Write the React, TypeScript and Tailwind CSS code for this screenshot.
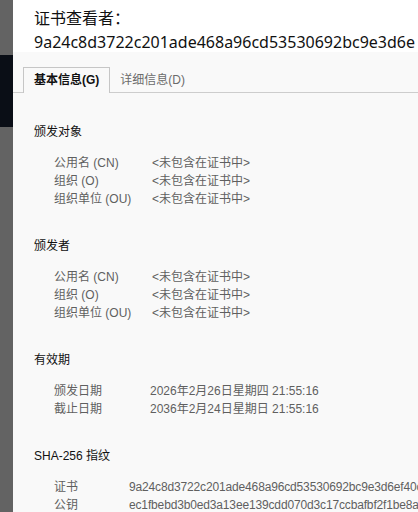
import React from 'react';

type Row = { label: string; value: string };
type Section = { title: string; labelWidth: string; rows: Row[] };

const NOT_INCLUDED = '<未包含在证书中>';

const sections: Section[] = [
  {
    title: '颁发对象',
    labelWidth: 'grid-cols-[98px_1fr]',
    rows: [
      { label: '公用名 (CN)', value: NOT_INCLUDED },
      { label: '组织 (O)', value: NOT_INCLUDED },
      { label: '组织单位 (OU)', value: NOT_INCLUDED },
    ],
  },
  {
    title: '颁发者',
    labelWidth: 'grid-cols-[98px_1fr]',
    rows: [
      { label: '公用名 (CN)', value: NOT_INCLUDED },
      { label: '组织 (O)', value: NOT_INCLUDED },
      { label: '组织单位 (OU)', value: NOT_INCLUDED },
    ],
  },
  {
    title: '有效期',
    labelWidth: 'grid-cols-[96px_1fr]',
    rows: [
      { label: '颁发日期', value: '2026年2月26日星期四 21:55:16' },
      { label: '截止日期', value: '2036年2月24日星期日 21:55:16' },
    ],
  },
  {
    title: 'SHA-256 指纹',
    labelWidth: 'grid-cols-[75px_1fr]',
    rows: [
      { label: '证书', value: '9a24c8d3722c201ade468a96cd53530692bc9e3d6ef40c' },
      { label: '公钥', value: 'ec1fbebd3b0ed3a13ee139cdd070d3c17ccbafbf2f1be8a' },
    ],
  },
];

const CertSection: React.FC<{ section: Section }> = ({ section }) => {
  return (
    <div className="mb-[29px]">
      <div className="text-[#111] mb-[13px]">{section.title}</div>
      <div className={`grid ${section.labelWidth} pl-[20px] text-[#5f5f5f]`}>
        {section.rows.map((r, i) => (
          <React.Fragment key={i}>
            <div>{r.label}</div>
            <div className={section.title.startsWith('SHA') ? 'tracking-[-0.15px]' : ''}>{r.value}</div>
          </React.Fragment>
        ))}
      </div>
    </div>
  );
};

const App: React.FC = () => {
  return (
    <div className="w-[418px] h-[512px] flex overflow-hidden whitespace-nowrap font-['Liberation_Sans','Noto_Sans_CJK_SC',sans-serif]">
      {/* background behind the dialog */}
      <div className="w-[13px] shrink-0 flex flex-col">
        <div className="h-[55px] bg-[#636363]"></div>
        <div className="h-[72px] bg-[#0a0e16]"></div>
        <div className="flex-1 bg-[#636363]"></div>
      </div>

      <div className="flex-1 min-w-0 flex flex-col bg-[#f9f9f9]">
        <div className="h-[52px] shrink-0 bg-white pl-[21px] pt-[6px] text-[16px] leading-[24px] text-[#111] font-['Noto_Sans','Noto_Sans_CJK_SC',sans-serif]">
          <div>证书查看者：</div>
          <div>9a24c8d3722c201ade468a96cd53530692bc9e3d6e</div>
        </div>

        <div className="h-[41px] shrink-0 flex items-start pt-[15px] pl-[10px] border-b border-[#cdcdcd] text-[12px]">
          <div className="relative h-[26px] px-[10px] leading-[24px] border border-b-0 border-[#c6c6c6] bg-[#f9f9f9] font-bold text-[#111]">
            基本信息(G)
          </div>
          <div className="h-[26px] px-[10px] pt-px leading-[24px] text-[#6b6b6b]">详细信息(D)</div>
        </div>

        <div className="flex-1 pl-[21px] pt-[30px] text-[12px] leading-[18px]">
          {sections.map((s, i) => (
            <CertSection key={i} section={s} />
          ))}
        </div>
      </div>
    </div>
  );
};

export default App;
